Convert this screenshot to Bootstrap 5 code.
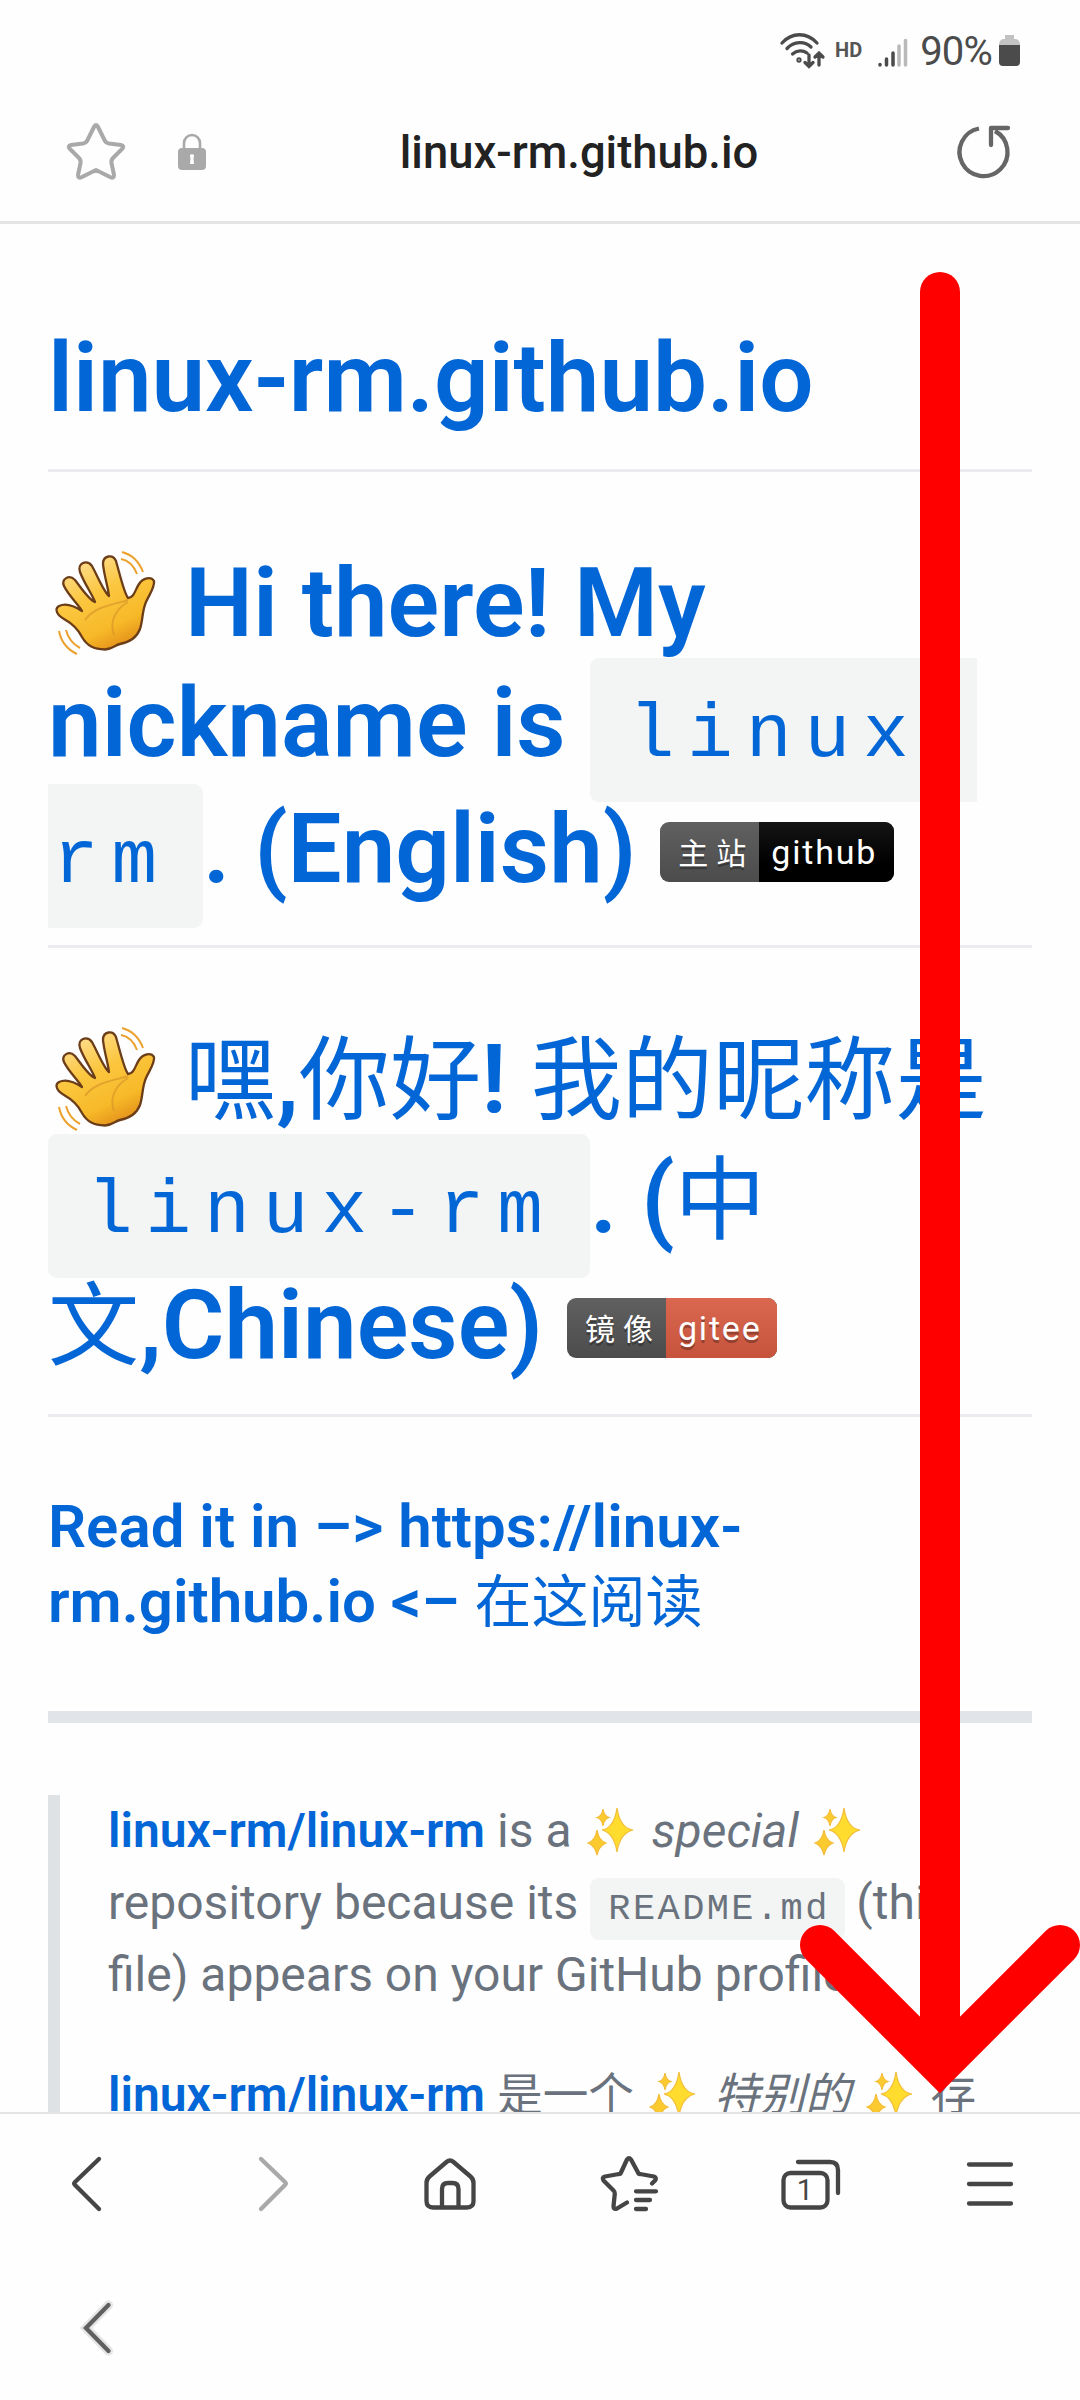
<!DOCTYPE html>
<html lang="en">
<head>
<meta charset="utf-8">
<meta name="viewport" content="width=device-width, initial-scale=1">
<title>linux-rm.github.io</title>
<link href="https://cdn.jsdelivr.net/npm/bootstrap@5.3.0/dist/css/bootstrap.min.css" rel="stylesheet">
<style>
body{width:1080px;height:2400px;overflow:hidden;background:#fefefe;font-family:Roboto,"Noto Sans CJK SC",sans-serif}
svg{display:block;flex:none;overflow:visible}
.status-row{height:84px;padding:19px 60px 0 0;color:#4b4b4b;font-size:40px;line-height:66px}
.hd-tag{font-size:20px;font-weight:700;line-height:62px;color:#555;margin-right:16px}
.wifi-ico{margin:14px 9px 0 0}
.signal-ico{margin:19px 12px 0 0}
.batt-ico{margin:16px 0 0 7px}
.url-row{height:140px;border-bottom:3px solid #e4e4e4;padding:0 70px 1px 67px}
.url-text{font-size:45.400px;font-weight:500;color:#222;line-height:60px;margin:2px auto 0;padding-right:6px}
.page-view{height:1888px;padding:0 48px;overflow:hidden}
.lnk{color:#0366d6;text-decoration:none}
.big{font-size:96px;font-weight:600;line-height:120px;color:#0366d6;margin:0;border-bottom:3px solid #eaecef;white-space:nowrap}
.title-head{padding:94px 0 31px}
.en-head{padding:71px 0 36px}
.cn-head{padding:71px 0 29px}
.ln{display:flex;align-items:baseline;height:120px}
.ln-tall{height:126px}
.cjk{font-weight:400;font-family:"Noto Sans CJK SC",sans-serif;line-height:0;font-size:.95em}
.hand-ico{margin:-13px 5px 0 -18px;align-self:flex-start}
.code-chip{display:block;flex:none;background:#f3f4f4;border-radius:9px;height:144px;line-height:156px;padding:0 0 0 39px;width:542px;font-family:"Liberation Mono",monospace;font-weight:400;font-size:76px;letter-spacing:13px;margin:-40px 0}
.chip-start{margin-left:24px;border-radius:9px 0 0 9px;width:387px}
.chip-end{border-radius:0 9px 9px 0;padding-left:5px;width:155px}
.shield{display:flex;width:234px;height:60px;margin:33px 0 0 24px;align-self:flex-start;border-radius:9px;overflow:hidden;font-size:34px;line-height:60px;color:#fff;font-weight:400;letter-spacing:1.8px;text-shadow:0 3px 0 rgba(1,1,1,.3);background:linear-gradient(#606060,#4c4c4c)}
.shield-r{width:210px}
.s1{width:99px;font-size:30px;line-height:58px;letter-spacing:8px;padding-left:18px;font-family:"Noto Sans CJK SC",sans-serif}
.s2{flex:1;padding-left:12px}
.s-dark{background:linear-gradient(#151515,#000 70%)}
.s-red{background:linear-gradient(#da6850,#c6533b)}
.sub{font-size:60px;font-weight:600;line-height:75px;color:#0366d6;margin:0;padding-top:72px;height:294px}
.thick{height:12px;background:#e1e4e8}
.quote{border-left:12px solid #dfe2e5;margin-top:72px;padding-left:48px;height:400px;font-size:48px;line-height:72px;color:#6a737d;white-space:nowrap}
.quote strong{font-weight:600}
.quote p{margin:0 0 48px}
.qln{display:flex;height:72px;align-items:baseline}
.spark-ico{align-self:flex-start;margin:11px 17px 0 15px}
.chip-s{display:block;flex:none;background:#f3f4f4;border-radius:9px;height:62px;line-height:62px;width:255px;padding-left:18px;margin:0 11px 0 12px;font-family:"Liberation Mono",monospace;font-size:37px;letter-spacing:2.4px}
.tool-row{height:144px;border-top:2px solid #e4e4e4}
.arrow-layer{left:0;top:0;z-index:5}
</style>
<script src="https://cdn.jsdelivr.net/npm/bootstrap@5.3.0/dist/js/bootstrap.bundle.min.js"></script>
</head>
<body class="d-flex flex-column position-relative">
<svg width="0" height="0" class="position-absolute">
<defs>
<linearGradient id="skin" x1=".2" y1="0" x2=".7" y2="1"><stop offset="0" stop-color="#ffe09a"/><stop offset=".4" stop-color="#fbc740"/><stop offset=".75" stop-color="#f7b928"/><stop offset="1" stop-color="#e08a18"/></linearGradient>
<symbol id="hand" viewBox="0 0 150 150">
<path d="M52 81 C43 75 35 73 29 76 C24 79 27 85 34 89 C43 94 48 99 52 107 C57 116 64 119 75 119.500 C83 119 85 115 90 114 C100 112 107 107 110 99 C113 90 112 81 116 72 C120 63 125 57 124 51 C121 46 113 48 109 54 C105 60 104 68 98 68 C94 63 90 45 86 31 C83 24 73 25 73 34 C74 45 78 57 79 66 C74 62 68 47 62 36 C57 29 47 33 50 42 C54 53 62 64 65 72 C59 70 52 59 45 50 C39 44 31 49 34 56 C38 65 49 75 52 81Z" fill="url(#skin)" stroke="#6b3d18" stroke-width="2.300" stroke-linejoin="round"/>
<path d="M55 90C65 76 83 75 98 70M84 105C79 91 86 79 98 72" fill="none" stroke="#d9932a" stroke-width="2" opacity=".65"/>
<path d="M92 22Q107 26 113 42M91 29Q102 31 107 44M29 101Q32 117 47 124M36 100Q39 112 50 118" fill="none" stroke="#eba12c" stroke-width="2"/>
</symbol>
<symbol id="spark" viewBox="0 0 48 52">
<path d="M30 2Q33 22 46 24Q33 27 30 46Q27 27 15 24Q27 22 30 2Z" fill="#ffdc2e" stroke="#f3bd3a" stroke-width="1.200"/>
<path d="M16 3Q17 10 22 11.500Q17 13 16 20Q15 13 10 11.500Q15 10 16 3ZM10 24Q12 35 19 37Q12 40 10 49Q8 40 1 37Q8 35 10 24Z" fill="#fbca2e" stroke="#f3bd3a" stroke-width="1.200"/>
</symbol>
</defs>
</svg>

<header>
<div class="status-row d-flex justify-content-end">
<svg class="wifi-ico" width="46" height="38" viewBox="0 0 46 38" fill="none" stroke="#4b4b4b" stroke-width="3.300" stroke-linecap="round"><path d="M2 10C12-1 27-1 37 10M7 15.500C14 8 25 8 31 14M12.500 21C17 17 23 17 27 20M29 22v11m-4-3.500l4 4 4-4M39 32V20m-4 4l4-4 4 4"/><circle cx="19" cy="27" r="1"/></svg>
<span class="hd-tag">HD</span>
<svg class="signal-ico" width="30" height="30" viewBox="0 0 30 30" fill="none" stroke="#4b4b4b" stroke-width="3.500" stroke-linecap="round"><path d="M2 26.500v.5M8.500 21v6M15 15v12"/><path d="M21 8v19M27.500 2.500V27" stroke="#b9b9b9"/></svg>
<span style="letter-spacing:-.8px">90%</span>
<svg class="batt-ico" width="21" height="32" viewBox="0 0 21 32"><path d="M6 0h9v4h2q4 1 4 6H0q0-5 4-6h2z" fill="#c2c2c2"/><path d="M0 10h21v17q0 4-4 4H4q-4 0-4-4z" fill="#4b4b4b"/></svg>
</div>
<div class="url-row d-flex align-items-center">
<svg width="58" height="58" viewBox="0 0 58 58" fill="none" stroke="#a9a9a9" stroke-width="4" stroke-linejoin="round"><path d="M27 4Q29 0 31 4L38 18Q39 20 42 20.500L54 22Q58 23 55 26L46 35Q44 37 44.500 40L47 52Q47 56 43 54L29 47 15 54Q11 56 11 52L13.500 40Q14 37 12 35L3 26Q0 23 4 22L16 20.500Q19 20 20 18Z"/></svg>
<svg width="28" height="38" viewBox="0 0 28 38" style="margin-left:53px"><path d="M6 17V10a8 8 0 0 1 16 0v7" fill="none" stroke="#a9a9a9" stroke-width="2.600"/><rect y="15" width="28" height="22" rx="4" fill="#a9a9a9"/><path d="M14 21a2.400 2.400 0 0 1 1.500 4l.5 6h-4l.5-6a2.400 2.400 0 0 1 1.500-4z" fill="#fff"/></svg>
<span class="url-text">linux-rm.github.io</span>
<svg width="52" height="54" viewBox="0 0 52 54" fill="none" stroke="#666" stroke-width="4.300"><path d="M21 3.500A24 24 0 1 0 37 6"/><path d="M33 20V3h17" stroke-linecap="round" stroke-linejoin="round"/></svg>
</div>
</header>

<main class="page-view">
<h1 class="big title-head"><a class="lnk" href="#">linux-rm.github.io</a></h1>
<h1 class="big en-head">
<span class="ln"><svg class="hand-ico" width="150" height="150"><use href="#hand"/></svg><span>Hi there! My</span></span>
<span class="ln ln-tall">nickname is<span class="code-chip chip-start">linux-</span></span>
<span class="ln"><span class="code-chip chip-end">rm</span><span>. (English)</span><span class="shield"><span class="s1">主站</span><span class="s2 s-dark">github</span></span></span>
</h1>
<h1 class="big cn-head">
<span class="ln"><svg class="hand-ico" width="150" height="150"><use href="#hand"/></svg><span><span class="cjk">嘿</span>,<span class="cjk">你好</span>! <span class="cjk">我的昵称是</span></span></span>
<span class="ln ln-tall"><span class="code-chip">linux-rm</span><span>. (<span class="cjk">中</span></span></span>
<span class="ln"><span><span class="cjk">文</span>,Chinese)</span><span class="shield shield-r"><span class="s1">镜像</span><span class="s2 s-red">gitee</span></span></span>
</h1>
<h3 class="sub">Read it in –&gt; https://linux-<br>rm.github.io &lt;– <span class="cjk">在这阅读</span></h3>
<div class="thick"></div>
<div class="quote">
<p><span class="qln"><strong class="lnk">linux-rm/linux-rm</strong><span style="margin-left:12px">is a</span><svg class="spark-ico" width="48" height="52"><use href="#spark"/></svg><em>special</em><svg class="spark-ico" width="48" height="52"><use href="#spark"/></svg></span>
<span class="qln"><span>repository because its</span><span class="chip-s">README.md</span><span>(this</span></span>
<span class="qln">file) appears on your GitHub profile.</span></p>
<p><span class="qln"><strong class="lnk">linux-rm/linux-rm</strong><span class="cjk" style="margin-left:12px">是一个</span><svg class="spark-ico" width="48" height="52"><use href="#spark"/></svg><em class="cjk">特别的</em><svg class="spark-ico" width="48" height="52"><use href="#spark"/></svg><span class="cjk">存</span></span></p>
</div>
</main>

<footer>
<nav class="tool-row" aria-label="Browser tools">
<svg width="1080" height="142" viewBox="0 2114 1080 142" fill="none" stroke="#454545" stroke-width="4.300" stroke-linecap="round" stroke-linejoin="round">
<path d="M99 2159L75 2182q-1.500 1.500 0 3L99 2209"/>
<path d="M261 2159l24 23q1.500 1.500 0 3l-24 24" stroke="#a9a9a9"/>
<path d="M426.500 2183q0-4 3-6.500l17-14.500q3.500-3 7 0l17 14.500q3 2.500 3 6.500v18q0 6.500-6.500 6.500h-34q-6.500 0-6.500-6.500zM442 2207v-18q0-6 6-6h4.500q6 0 6 6v18"/>
<path d="M652 2183.500l3-3q2-3-1-4l-14-2.500q-1.500 0-2-1.500l-7-13q-2-2.500-4 0l-6 13q-.5 1.500-2 1.500l-14 2.500q-3.500 1-1.500 4l10 10q1.500 1.500 1.300 3l-1.300 13q0 3.500 3.500 2l10-6M636 2191.300h20M636 2200h14M636 2209h10"/>
<rect x="783.500" y="2173" width="44" height="34.500" rx="7"/><path d="M798 2162h32q8 0 8 8v23M969 2164.500h42M969 2184h42M969 2203.500h42"/>
<text x="805" y="2200" text-anchor="middle" font-family="Roboto" font-size="29" fill="#454545" stroke="none">1</text>
</svg>
</nav>
<div><svg width="1080" height="144" viewBox="0 2256 1080 144" fill="none" stroke-linecap="round"><path d="M108.500 2305L86 2328l22.500 23" stroke="#e5e5e5" stroke-width="9"/><path d="M108.500 2305L86 2328l22.500 23" stroke="#606060" stroke-width="4.300"/></svg></div>
</footer>

<svg class="arrow-layer position-absolute" width="1080" height="2400" fill="none" stroke="#f00" stroke-width="40" stroke-linecap="round"><path d="M940 292V2060"/><path d="M820 1945L940 2065 1060 1945" stroke-linejoin="miter"/></svg>
</body>
</html>
